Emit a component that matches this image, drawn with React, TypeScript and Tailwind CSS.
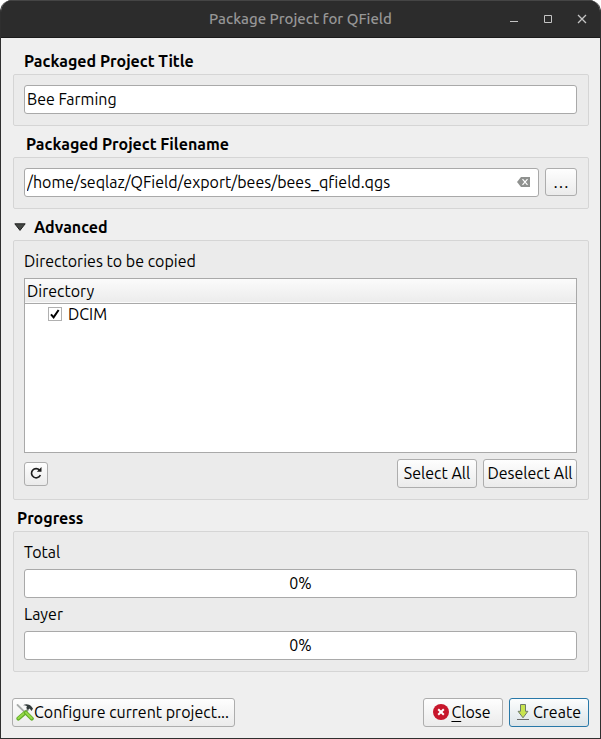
import React, { useState } from "react";

const FONT =
  "font-['Ubuntu','Open_Sans','Noto_Sans',sans-serif] text-[16px] leading-5 text-black";
const BUTTON =
  "flex items-center justify-center rounded-[3px] border border-[#adadad] bg-linear-to-b from-[#fefefe] to-[#ebebeb] whitespace-nowrap";
const TEXT_BUTTON = `${BUTTON} h-[29px] pb-0.5`;
const FIELD = "h-[29px] w-full rounded-[3px] border border-[#a9a9a9] bg-white";
const PANEL =
  "rounded-[2px] border border-[#d5d5d5] bg-[#ebebeb] pt-2.5 pr-[11px] pb-[11px] pl-2.5";
const HEADING = "flex h-[31px] items-center pt-1 font-bold text-black";

function ProgressBar({ label, value }: { label: string; value: number }) {
  return (
    <div>
      <div>{label}</div>
      <div
        role="progressbar"
        aria-label={label}
        aria-valuenow={value}
        className={`${FIELD} mt-[7px] flex items-center justify-center pb-0.5`}
      >
        {value}%
      </div>
    </div>
  );
}

function ToolsIcon() {
  return (
    <svg width="18" height="18" viewBox="0 0 18 18" className="shrink-0" aria-hidden="true">
      <path d="M1.5 2 L9 9.4" stroke="#a9adab" strokeWidth="1.8" strokeLinecap="round" />
      <path d="M12 6.5 L9 9.5" stroke="#8d9a8d" strokeWidth="2.2" />
      <path d="M7 2.2 C10 0.4 13 1 15 3 L17 5.4 L15.6 8 L13.6 5.6 L12 7 L10.2 5 L11 3.4 C10 2.4 8.6 2.2 7 2.2 Z" fill="#333b3b" />
      <path d="M2.4 15.6 L9.4 9.4" stroke="#62ad28" strokeWidth="4" strokeLinecap="round" />
      <path d="M2.4 15.3 L9.2 9.2" stroke="#97d94a" strokeWidth="2" strokeLinecap="round" />
      <path d="M10 9.8 L15.8 15.6" stroke="#62ad28" strokeWidth="4" strokeLinecap="round" />
      <path d="M10 9.6 L15.6 15.2" stroke="#97d94a" strokeWidth="2" strokeLinecap="round" />
    </svg>
  );
}

export default function App() {
  const [title, setTitle] = useState("Bee Farming");
  const [file, setFile] = useState("/home/seqlaz/QField/export/bees/bees_qfield.qgs");
  const [checked, setChecked] = useState(true);

  return (
    <div className="bg-white">
      <div className={`${FONT} flex min-h-screen flex-col overflow-hidden rounded-t-[12px] border border-t-0 border-[#2f2f2f] bg-[#efefef]`}>
        <header className="grid h-[38px] grid-cols-[1fr_auto_1fr] items-center border-t border-b border-t-[#454545] border-b-[#1b1b1b] bg-[#2c2c2c]">
          <span />
          <h1 className="text-[15px] font-medium text-[#969696]">Package Project for QField</h1>
          <div className="flex justify-end gap-2 pr-[5px] text-[#c4c4c4]">
            <button aria-label="Minimize" className="flex size-[26px] items-center justify-center">
              <svg width="10" height="10" viewBox="0 0 10 10"><path d="M1 7.5h8" stroke="currentColor" /></svg>
            </button>
            <button aria-label="Maximize" className="flex size-[26px] items-center justify-center">
              <svg width="10" height="10" viewBox="0 0 10 10"><path d="M1.5 1.5h7v7h-7z" fill="none" stroke="currentColor" /></svg>
            </button>
            <button aria-label="Close window" className="flex size-[26px] items-center justify-center">
              <svg width="10" height="10" viewBox="0 0 10 10"><path d="M1 1l8 8M9 1l-8 8" stroke="currentColor" strokeWidth="1.3" /></svg>
            </button>
          </div>
        </header>

        <main className="flex flex-1 flex-col pt-[5px] pr-[11px] pb-[11px] pl-3">
          <label htmlFor="title" className={`${HEADING} pl-[11px]`}>Packaged Project Title</label>
          <div className={PANEL}>
            <input id="title" value={title} onChange={(e) => setTitle(e.target.value)} className={`${FIELD} block px-0.5 pb-0.5`} />
          </div>

          <label htmlFor="file" className={`${HEADING} pl-[13px]`}>Packaged Project Filename</label>
          <div className={`${PANEL} flex gap-1.5`}>
            <div className={`${FIELD} flex items-center pr-2`}>
              <input id="file" value={file} onChange={(e) => setFile(e.target.value)} className="min-w-0 flex-1 px-0.5 pb-0.5 outline-none" />
              <button aria-label="Clear" onClick={() => setFile("")} className="pb-px">
                <svg width="13" height="10" viewBox="0 0 13 10" className="block">
                  <path d="M4 0h9v10H4L0 5z" fill="#8f918f" />
                  <path d="M5.5 2.2l5 5.6M10.5 2.2l-5 5.6" stroke="#fff" strokeWidth="1.2" />
                </svg>
              </button>
            </div>
            <button aria-label="Browse" className={`${BUTTON} h-7 w-8 shrink-0`}>…</button>
          </div>

          <h2 className={HEADING}>
            <button className="flex items-center gap-2 pl-px">
              <svg width="12" height="8" viewBox="0 0 12 8" aria-hidden="true"><path d="M.8.8h10.4L6 7.4z" fill="#444744" stroke="#222" /></svg>
              Advanced
            </button>
          </h2>
          <section className={`${PANEL} flex flex-1 flex-col`}>
            <div>Directories to be copied</div>
            <div className="mt-[7px] min-h-[120px] flex-1 border border-[#a9a9a9] bg-white">
              <table className="w-full border-collapse text-left">
                <thead>
                  <tr className="h-6 border-b border-[#a9a9a9] bg-linear-to-b from-[#fbfbfb] to-[#ececec]">
                    <th className="p-0 pl-0.5 font-normal">Directory</th>
                  </tr>
                </thead>
                <tbody>
                  <tr>
                    <td className="p-0 pl-[23px]">
                      <label className="flex items-center gap-1.5">
                        <span className="grid size-3.5">
                          <input type="checkbox" checked={checked} onChange={(e) => setChecked(e.target.checked)} className="col-start-1 row-start-1 size-3.5 appearance-none border border-[#b0b0b0] bg-white" />
                          {checked && (
                            <svg viewBox="0 0 14 14" className="pointer-events-none col-start-1 row-start-1 size-3.5" aria-hidden="true">
                              <path d="M3 7.4l2.6 3L10.6 3" fill="none" stroke="#000" strokeWidth="2" />
                            </svg>
                          )}
                        </span>
                        DCIM
                      </label>
                    </td>
                  </tr>
                </tbody>
              </table>
            </div>
            <div className="mt-1.5 flex items-center gap-1.5">
              <button aria-label="Refresh" className={`${BUTTON} mr-auto size-6 pb-0.5`}>
                <svg width="12" height="12" viewBox="0 0 12 12" aria-hidden="true">
                  <path d="M9.6 3.2A4.6 4.6 0 1 0 10.4 8" fill="none" stroke="#1c1c1c" strokeWidth="1.6" />
                  <path d="M11.5 0v4.8H6.8z" fill="#1c1c1c" />
                </svg>
              </button>
              <button className={`${TEXT_BUTTON} w-20`}>Select All</button>
              <button className={`${TEXT_BUTTON} w-[94px]`}>Deselect All</button>
            </div>
          </section>

          <h2 className={`${HEADING} pl-1`}>Progress</h2>
          <section className={`${PANEL} flex flex-col gap-1.5`}>
            <ProgressBar label="Total" value={0} />
            <ProgressBar label="Layer" value={0} />
          </section>

          <footer className="-ml-px mt-[26px] flex gap-1.5">
            <button className={`${TEXT_BUTTON} mr-auto w-[223px] pr-0.5`}>
              <ToolsIcon />
              Configure current project...
            </button>
            <button className={`${TEXT_BUTTON} w-20 gap-0.5 pr-0.5`}>
              <svg width="16" height="16" viewBox="0 0 16 16" className="shrink-0" aria-hidden="true">
                <circle cx="8" cy="8" r="8" fill="#c7162b" />
                <path d="M5.2 5.2l5.6 5.6M10.8 5.2l-5.6 5.6" stroke="#fff" strokeWidth="2" />
              </svg>
              <span><span className="underline underline-offset-3">C</span>lose</span>
            </button>
            <button className="flex h-[29px] w-20 items-center justify-center gap-1 rounded-[3px] border border-[#2878a8] bg-linear-to-b from-[#fcfdfd] to-[#dce4e8] pb-0.5">
              <svg width="12" height="16" viewBox="0 0 12 16" className="shrink-0" aria-hidden="true">
                <path d="M3.5.5h5v6.8h2.4L6 13.8 1.1 7.3h2.4z" fill="#c8e44f" stroke="#6d7a6a" />
                <path d="M0 15.5h12" stroke="#6a6a6a" />
              </svg>
              Create
            </button>
          </footer>
        </main>
      </div>
    </div>
  );
}
